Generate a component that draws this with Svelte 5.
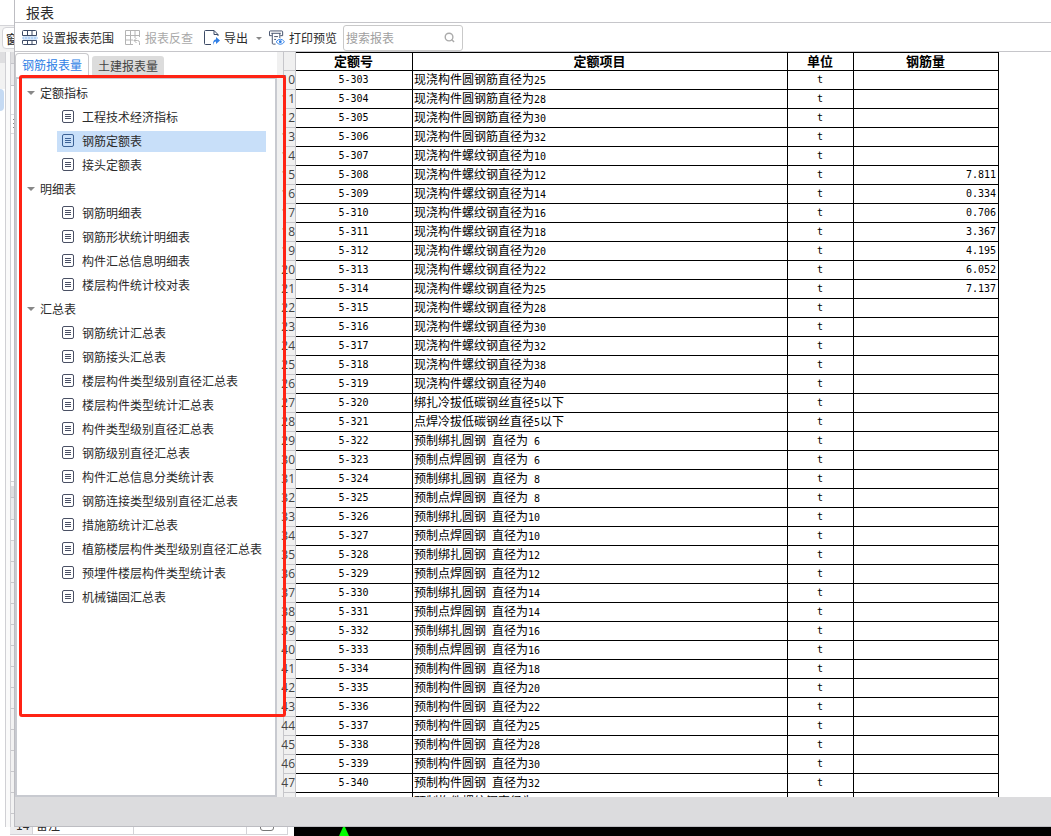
<script>
  const groups = [
    { name: '定额指标', items: ['工程技术经济指标', '钢筋定额表', '接头定额表'] },
    {
      name: '明细表',
      items: ['钢筋明细表', '钢筋形状统计明细表', '构件汇总信息明细表', '楼层构件统计校对表'],
    },
    {
      name: '汇总表',
      items: [
        '钢筋统计汇总表',
        '钢筋接头汇总表',
        '楼层构件类型级别直径汇总表',
        '楼层构件类型统计汇总表',
        '构件类型级别直径汇总表',
        '钢筋级别直径汇总表',
        '构件汇总信息分类统计表',
        '钢筋连接类型级别直径汇总表',
        '措施筋统计汇总表',
        '植筋楼层构件类型级别直径汇总表',
        '预埋件楼层构件类型统计表',
        '机械锚固汇总表',
      ],
    },
  ];
  let selected = $state('钢筋定额表');

  const names = [
    '现浇构件圆钢筋直径为25', '现浇构件圆钢筋直径为28', '现浇构件圆钢筋直径为30', '现浇构件圆钢筋直径为32',
    '现浇构件螺纹钢直径为10', '现浇构件螺纹钢直径为12', '现浇构件螺纹钢直径为14', '现浇构件螺纹钢直径为16',
    '现浇构件螺纹钢直径为18', '现浇构件螺纹钢直径为20', '现浇构件螺纹钢直径为22', '现浇构件螺纹钢直径为25',
    '现浇构件螺纹钢直径为28', '现浇构件螺纹钢直径为30', '现浇构件螺纹钢直径为32', '现浇构件螺纹钢直径为38',
    '现浇构件螺纹钢直径为40', '绑扎冷拔低碳钢丝直径5以下', '点焊冷拔低碳钢丝直径5以下',
    '预制绑扎圆钢 直径为 6', '预制点焊圆钢 直径为 6', '预制绑扎圆钢 直径为 8', '预制点焊圆钢 直径为 8',
    '预制绑扎圆钢 直径为10', '预制点焊圆钢 直径为10', '预制绑扎圆钢 直径为12', '预制点焊圆钢 直径为12',
    '预制绑扎圆钢 直径为14', '预制点焊圆钢 直径为14', '预制绑扎圆钢 直径为16', '预制点焊圆钢 直径为16',
    '预制构件圆钢 直径为18', '预制构件圆钢 直径为20', '预制构件圆钢 直径为22', '预制构件圆钢 直径为25',
    '预制构件圆钢 直径为28', '预制构件圆钢 直径为30', '预制构件圆钢 直径为32', '预制构件螺纹钢直径为10',
  ];
  const amounts = { 308: '7.811', 309: '0.334', 310: '0.706', 311: '3.367', 312: '4.195', 313: '6.052', 314: '7.137' };
  const rows = names.map((name, i) => ({
    line: 10 + i,
    code: `5-${303 + i}`,
    parts: name.match(/[\x20-\x7e]+|[^\x20-\x7e]+/g),
    amount: amounts[303 + i] ?? '',
  }));
</script>

<div class="screen">
  <div class="upper">
    <div class="behind" aria-hidden="true">
      <div class="b-top"></div>
      <div class="b-bar"><span>窗</span></div>
      <div class="b-cols">
        <div class="b-left"><i class="cap"></i><i class="tile"></i></div>
        <div class="b-right">
          <i class="cap"></i><i class="cell"></i>
          <div class="fill"><i class="grip"></i></div>
          <i class="cap"></i><i class="cell"></i><i class="blank"></i><i class="ruled"></i>
        </div>
      </div>
    </div>

    <main class="dialog">
      <header class="title">报表</header>
      <div class="toolbar">
        <button class="tool">
          <svg width="16" height="16" viewBox="0 0 16 16" fill="none">
            <path d="M1 6h14v4H1z" fill="#d3e5fa" />
            <path d="M.5 5.500v-4q0-1 1-1h12q1 0 1 1v4zM.5 10.500v3q0 1 1 1h12q1 0 1-1v-3zM5.500.5v5M10 .5v5M5.500 10.500v4M10 10.500v4" stroke="#3d4b66" />
            <path d="M0 8h16" stroke="#8fbcf0" stroke-dasharray="2 1" />
          </svg>
          设置报表范围
        </button>
        <button class="tool" disabled>
          <svg width="16" height="16" viewBox="0 0 16 16" fill="none" stroke="#b4b4b4">
            <path d="M14.500 7V.5H.5v14H8M.5 5.500h14M.5 10H8M5.500.5v14M10 .5V8" />
            <path d="M11.500 8 9 10.500l2.500 2.500M9 10.500h3.500q2 0 2 2V15" />
          </svg>
          报表反查
        </button>
        <button class="tool">
          <svg width="16" height="16" viewBox="0 0 16 16" fill="none">
            <path d="M7 14.500H1.500q-1 0-1-1v-12q0-1 1-1H10l4 4V6M10 .5v4h4" stroke="#3d4b66" />
            <path d="M9 15c0-4 1-5.500 3-5.500V7l4 3.500-4 3.500v-2.500c-1.500 0-2.200 1-3 3.500z" fill="#2f7fe6" />
          </svg>
          导出
          <i class="caret"></i>
        </button>
        <button class="tool">
          <svg width="16" height="16" viewBox="0 0 17 16" fill="none">
            <path d="M3 5.500H.5v-4q0-1 1-1h12q1 0 1 1v4H12M3.500 3v10.500q0 1 1 1H7M11.500 3v5M2.500 3h10M5.500 6.500h4M5.500 9.500h2" stroke="#3d4b66" />
            <path d="M7.500 12q4.500-5.500 9 0-4.500 5.500-9 0z" stroke="#2f7fe6" fill="#fff" />
            <circle cx="12" cy="12" r="1.500" fill="#2f7fe6" />
          </svg>
          打印预览
        </button>
        <label class="search">
          <input type="text" placeholder="搜索报表" aria-label="搜索报表" />
          <svg width="11" height="11" viewBox="0 0 12 12" fill="none" stroke="#aaa" stroke-width="1.500">
            <circle cx="5.500" cy="5.500" r="4.200" /><path d="m8.500 8.500 2.500 2.500" />
          </svg>
        </label>
      </div>

      <div class="body">
        <aside class="side">
          <div class="tabs" role="tablist">
            <button class="tab active" role="tab" aria-selected="true">钢筋报表量</button>
            <button class="tab" role="tab" aria-selected="false">土建报表量</button>
          </div>
          <nav class="tree">
            {#each groups as group}
              <button class="group"><i class="arrow"></i>{group.name}</button>
              <ul>
                {#each group.items as item}
                  <li>
                    <button class="leaf" class:selected={selected === item} onclick={() => (selected = item)}>
                      <svg width="13" height="13" viewBox="0 0 13 13" fill="none" stroke="currentColor">
                        <rect x=".5" y=".5" width="11" height="12" rx="1.500" />
                        <path d="M3 4.500h6M3 6.500h6M3 8.500h6" />
                      </svg>
                      <span>{item}</span>
                    </button>
                  </li>
                {/each}
              </ul>
            {/each}
          </nav>
          <div class="highlight"></div>
        </aside>

        <section class="sheet">
          <table>
            <colgroup><col class="c-line" /><col class="c-code" /><col class="c-name" /><col class="c-unit" /><col class="c-amount" /></colgroup>
            <thead>
              <tr><td class="line"></td><th>定额号</th><th>定额项目</th><th>单位</th><th>钢筋量</th></tr>
            </thead>
            <tbody>
              {#each rows as row}
                <tr>
                  <th class="line" scope="row"><span>{row.line}</span></th>
                  <td class="center mono">{row.code}</td>
                  <td class="name">{#each row.parts as part}{#if part.charCodeAt(0) < 127}<span class="mono">{part}</span>{:else}{part}{/if}{/each}</td>
                  <td class="center mono">t</td>
                  <td class="right mono">{row.amount}</td>
                </tr>
              {/each}
            </tbody>
          </table>
        </section>
      </div>
      <footer></footer>
    </main>
  </div>

  <div class="below" aria-hidden="true">
    <div class="b-num"><span>14</span></div>
    <div class="b-label"><span>备注</span></div>
    <div class="b-value"></div>
    <div class="b-check"><i></i></div>
    <div class="b-canvas">
      <svg width="12" height="9" viewBox="0 0 12 9"><path d="M5 0h2l4 9H1z" fill="#0f0" /></svg>
    </div>
  </div>
</div>

<style>
  :global(body) { margin: 0; background: #fff; }
  .screen, .screen * { box-sizing: border-box; }
  .screen {
    height: 100vh;
    display: flex;
    flex-direction: column;
    overflow: hidden;
    font: 12px/16px "Noto Sans CJK SC", sans-serif;
    color: #2b2b2b;
  }
  button {
    font: inherit;
    color: inherit;
    background: none;
    border: 0;
    padding: 0;
    margin: 0;
    white-space: nowrap;
    text-align: left;
  }
  i { display: block; }
  .upper { flex: 1; min-height: 0; display: flex; }

  .behind { width: 14px; display: flex; flex-direction: column; overflow: hidden; background: #fafafa; }
  .b-top { height: 26px; background: #fff; border-bottom: 1px solid #d4d4d8; }
  .b-bar { height: 26px; padding: 1px 0 2px 2px; background: #f2f2f2; }
  .b-bar span {
    display: block;
    width: 40px;
    height: 22px;
    padding-left: 3px;
    line-height: 21px;
    font-weight: 500;
    background: #fff;
    border: 1px solid #d4d4d8;
    border-radius: 4px;
  }
  .b-cols { flex: 1; display: flex; min-height: 0; }
  .b-left { width: 6px; border-right: 1px solid #d0d0d4; background: #fff; }
  .b-left .cap { height: 37px; background: #f2f2f2; border-top: 11px solid #dedee0; }
  .b-left .tile { height: 22px; margin-right: 1px; background: #c5daf3; border-radius: 0 4px 4px 0; }
  .b-right { flex: 1; margin-left: 4px; display: flex; flex-direction: column; border-left: 1px solid #d0d0d4; }
  .b-right .cap { height: 12px; background: #dedee0; border-bottom: 1px solid #c4c4ca; }
  .b-right .cell { height: 22px; background: #ececee; border-bottom: 1px solid #c4c4ca; }
  .b-right .fill { height: 396px; padding-top: 28px; background: #fff; border-bottom: 1px solid #d0d0d4; margin-bottom: 4px; }
  .b-right .grip { height: 20px; padding: 4px 0 4px 2px; border: solid #dcdce0; border-width: 1px 0; background: repeating-linear-gradient(#888 0 1px, #fff 1px 4px) content-box; }
  .b-right .blank { height: 21px; background: #fff; border-bottom: 1px solid #d0d0d4; }
  .b-right .ruled { flex: 1; background: repeating-linear-gradient(#f2f2f2 0 20px, #c8c8cc 20px 21px); }

  .dialog { flex: 1; min-width: 0; display: flex; flex-direction: column; background: #fff; border-left: 1px solid #bdbdc2; }
  .title { height: 22px; padding: 3px 11px 0; font-size: 14px; line-height: 18px; }
  .toolbar {
    height: 30px;
    display: flex;
    align-items: center;
    gap: 11px;
    padding: 1px 0 0 7px;
    border-top: 1px solid #c6c6ca;
    border-bottom: 1px solid #c6c6ca;
  }
  .tool { display: flex; align-items: center; gap: 4px; }
  .tool:disabled { color: #a9a9a9; }
  .caret { margin: 2px -4px 0 4px; border: 3px solid transparent; border-top-color: #888; border-bottom: 0; }
  .search {
    display: flex;
    align-items: center;
    width: 120px;
    height: 26px;
    margin-left: -5px;
    padding: 0 7px 0 2px;
    border: 1px solid #c9c9c9;
    border-radius: 3px;
  }
  .search input { flex: 1; min-width: 0; padding: 0; border: 0; outline: 0; font: inherit; background: none; }
  .search input::placeholder { color: #a0a0a0; }

  .body { flex: 1; min-height: 0; display: flex; background: #f0f0f0; }
  .side { position: relative; width: 262px; display: flex; flex-direction: column; background: #fff; }
  .tabs { display: flex; align-items: flex-end; gap: 3px; height: 25px; padding-top: 1px; }
  .tab { height: 21px; padding: 0 6px 2px; color: #444; background: #dcdcdc; border-radius: 3px 3px 0 0; }
  .tab.active { height: 24px; color: #2f7fe6; background: #fff; border: 1px solid #c9c9cc; border-bottom: 0; border-radius: 4px 4px 0 0; }
  .tree { flex: 1; min-height: 0; padding: 2px 9px 0 10px; border: 2px solid #c8cad0; }
  .group { display: flex; align-items: center; gap: 5px; width: 100%; height: 24px; }
  .arrow { border: 4px solid transparent; border-top-color: #888; border-bottom: 0; }
  ul { list-style: none; margin: 0; padding: 0 0 0 30px; }
  li { height: 24px; padding: 2px 0 1px; }
  .leaf { display: flex; align-items: center; gap: 7px; width: 100%; height: 21px; padding: 0 0 2px 5px; }
  .leaf svg { color: #4a5064; flex: none; }
  .leaf.selected { background: #c8dff9; }
  .leaf.selected svg { color: #3d6296; }
  .highlight {
    position: absolute;
    inset: 23px -9px 80px 4px;
    border: 3px solid #ff2314;
    border-radius: 3px;
    pointer-events: none;
    z-index: 1;
  }

  .sheet {
    flex: 1;
    min-width: 0;
    margin-left: 3px;
    padding-left: 3px;
    overflow: hidden;
    background: linear-gradient(90deg, #f0f0f0 3px, #fff 3px);
  }
  table { table-layout: fixed; width: 716px; border-collapse: separate; border-spacing: 0; color: #000; }
  .c-line { width: 13px; }
  .c-code { width: 117px; }
  .c-name { width: 375px; }
  .c-unit { width: 66px; }
  .c-amount { width: 145px; }
  th, td {
    height: 19px;
    padding: 0 2px 0 1px;
    line-height: 16px;
    border-right: 1px solid #000;
    border-bottom: 1px solid #000;
    white-space: nowrap;
  }
  thead th { height: 19px; padding-bottom: 2px; border-top: 1px solid #000; font-size: 13px; line-height: 15px; font-weight: 700; }
  .line {
    padding: 0;
    font: 12px/18px "Open Sans", sans-serif;
    color: #444;
    background: #f0f0f0;
    border: solid #c6c6ca;
    border-width: 0 1px 1px;
  }
  .line span { display: flex; justify-content: flex-end; }
  .center { text-align: center; }
  .right { text-align: right; }
  .mono { font-family: "DejaVu Sans Mono", monospace; font-size: 10px; white-space: pre; }
  footer { height: 30px; background: #dcdcde; border-bottom: 1px solid #bdbdc2; }

  .below { height: 9px; display: flex; padding-left: 10px; overflow: hidden; }
  .below > div { height: 8px; overflow: hidden; border-right: 1px solid #d4d4d8; border-bottom: 1px solid #d4d4d8; }
  .below span { display: block; margin-top: -10px; }
  .b-num { width: 23px; padding-left: 6px; background: #ececee; }
  .b-label { width: 101px; padding-left: 3px; }
  .b-value { width: 113px; }
  .b-check { width: 41px; padding-left: 13px; }
  .b-check i { width: 14px; height: 14px; margin-top: -10px; border: 1px solid #777; border-radius: 3px; }
  .below > .b-canvas { flex: 1; height: 9px; margin-left: 6px; padding-left: 44px; border: 0; background: #000; }
  .b-canvas svg { display: block; }
</style>
